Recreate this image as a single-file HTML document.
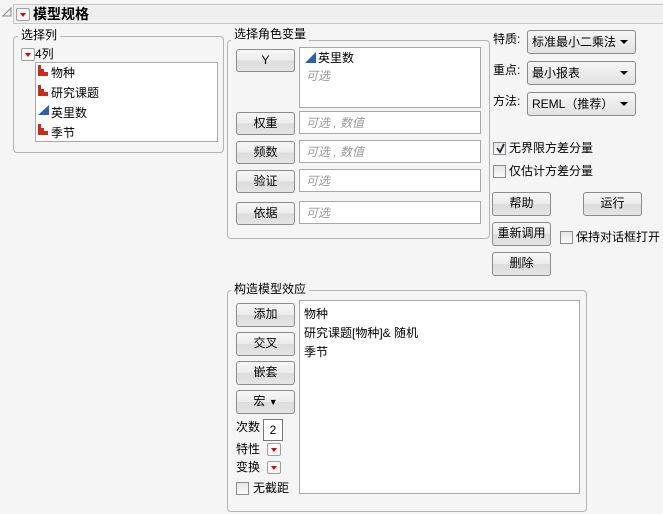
<!DOCTYPE html>
<html><head><meta charset="utf-8"><style>
*{box-sizing:border-box;margin:0;padding:0}
body{width:663px;height:514px;background:#f5f5f5;font-family:"Liberation Sans","Noto Sans CJK SC",sans-serif;font-size:12px;color:#000;position:relative;overflow:hidden}
.a{position:absolute}
.grp{position:absolute;border:1px solid #b4b4b4;border-radius:4px}
.lg{position:absolute;background:#f5f5f5;padding:0 3px;font-size:12px;line-height:14px}
.btn{position:absolute;border:1px solid #8c8c8c;border-radius:3px;background:linear-gradient(#f6f6f6 0%,#ececec 50%,#dcdcdc 51%,#e4e4e4 100%);text-align:center;font-size:12px;line-height:21px}
.box{position:absolute;background:#fff;border:1px solid #a8a8a8}
.ph{color:#999;font-style:italic;position:absolute;left:6px;top:4px;line-height:14px}
.rb{position:absolute;width:14px;height:13px;border:1px solid #a0a0a0;border-radius:2px;background:#f8f8f8}
.rb:after{content:"";position:absolute;left:3px;top:4px;border-left:3.5px solid transparent;border-right:3.5px solid transparent;border-top:4px solid #d00}
.dd{position:absolute;border:1px solid #8c8c8c;border-radius:3px;background:linear-gradient(#f6f6f6,#e2e2e2);line-height:22px;padding-left:4px}
.dd:after{content:"";position:absolute;right:7px;top:9px;border-left:4px solid transparent;border-right:4px solid transparent;border-top:4px solid #000}
.cb{position:absolute;width:13px;height:13px;border:1px solid #8c8c8c;background:linear-gradient(#e6e6e6,#fafafa)}
</style></head><body>
<div class="a" style="left:13px;top:4px;width:660px;height:20px;border:1px solid #c8c8c8;background:#efefef"></div>
<svg class="a" style="left:2px;top:7px" width="10" height="10"><path d="M1 9 L9 9 L9 1 Z" fill="none" stroke="#888"/></svg>
<div class="rb" style="left:16px;top:8px"></div>
<div class="a" style="left:33px;top:5px;font-size:14px;font-weight:bold;line-height:18px">模型规格</div>

<div class="grp" style="left:13px;top:36px;width:211px;height:117px"></div>
<div class="lg" style="left:18px;top:28px">选择列</div>
<div class="rb" style="left:21px;top:48px"></div>
<div class="a" style="left:35px;top:47px;line-height:14px">4列</div>
<div class="box" style="left:35px;top:62px;width:183px;height:80px"></div>
<svg class="a" style="left:37px;top:64px" width="14" height="76">
<g fill="#cc2a1a"><rect x="1" y="1" width="3" height="11"/><rect x="4" y="5" width="3" height="7"/><rect x="7" y="8" width="4" height="4"/>
<rect x="1" y="21" width="3" height="11"/><rect x="4" y="25" width="3" height="7"/><rect x="7" y="28" width="4" height="4"/>
<rect x="1" y="60" width="3" height="11"/><rect x="4" y="64" width="3" height="7"/><rect x="7" y="67" width="4" height="4"/></g>
<path d="M1 51 L12 41 L12 51 Z" fill="#2f5fb0"/></svg>
<div class="a" style="left:51px;top:63px;line-height:20px">物种<br>研究课题<br>英里数<br>季节</div>

<div class="grp" style="left:227px;top:40px;width:263px;height:199px"></div>
<div class="lg" style="left:231px;top:27px">选择角色变量</div>
<div class="btn" style="left:236px;top:49px;width:59px;height:23px">Y</div>
<div class="box" style="left:299px;top:47px;width:182px;height:61px"><svg class="a" style="left:5px;top:4px" width="12" height="12"><path d="M0 11 L11 0 L11 11Z" fill="#2f5fb0"/></svg><span class="a" style="left:18px;top:3px;line-height:14px">英里数</span><span class="ph" style="top:21px">可选</span></div>
<div class="btn" style="left:236px;top:112px;width:59px;height:23px">权重</div>
<div class="box" style="left:299px;top:111px;width:182px;height:23px"><span class="ph">可选 , 数值</span></div>
<div class="btn" style="left:236px;top:141px;width:59px;height:23px">频数</div>
<div class="box" style="left:299px;top:140px;width:182px;height:23px"><span class="ph">可选 , 数值</span></div>
<div class="btn" style="left:236px;top:170px;width:59px;height:23px">验证</div>
<div class="box" style="left:299px;top:169px;width:182px;height:23px"><span class="ph">可选</span></div>
<div class="btn" style="left:236px;top:202px;width:59px;height:23px">依据</div>
<div class="box" style="left:299px;top:201px;width:182px;height:23px"><span class="ph">可选</span></div>

<div class="a" style="left:493px;top:32px;line-height:14px">特质:</div>
<div class="dd" style="left:527px;top:30px;width:109px;height:24px">标准最小二乘法</div>
<div class="a" style="left:493px;top:63px;line-height:14px">重点:</div>
<div class="dd" style="left:527px;top:61px;width:109px;height:24px">最小报表</div>
<div class="a" style="left:493px;top:94px;line-height:14px">方法:</div>
<div class="dd" style="left:527px;top:92px;width:109px;height:24px">REML（推荐）</div>
<div class="cb" style="left:493px;top:142px"><svg class="a" style="left:1px;top:0" width="11" height="11"><path d="M2 5 L5 9 L9 1" fill="none" stroke="#223" stroke-width="1.8"/></svg></div>
<div class="a" style="left:509px;top:141px;line-height:14px">无界限方差分量</div>
<div class="cb" style="left:493px;top:165px"></div>
<div class="a" style="left:509px;top:164px;line-height:14px">仅估计方差分量</div>
<div class="btn" style="left:492px;top:192px;width:59px;height:24px">帮助</div>
<div class="btn" style="left:583px;top:192px;width:59px;height:24px">运行</div>
<div class="btn" style="left:492px;top:222px;width:59px;height:24px">重新调用</div>
<div class="cb" style="left:560px;top:231px"></div>
<div class="a" style="left:576px;top:230px;line-height:14px">保持对话框打开</div>
<div class="btn" style="left:492px;top:252px;width:59px;height:24px">删除</div>

<div class="grp" style="left:227px;top:290px;width:360px;height:222px"></div>
<div class="lg" style="left:231px;top:282px">构造模型效应</div>
<div class="btn" style="left:236px;top:303px;width:59px;height:24px">添加</div>
<div class="btn" style="left:236px;top:332px;width:59px;height:24px">交叉</div>
<div class="btn" style="left:236px;top:361px;width:59px;height:24px">嵌套</div>
<div class="btn" style="left:236px;top:390px;width:59px;height:24px">宏 <span style="font-size:9px">▼</span></div>
<div class="box" style="left:299px;top:300px;width:281px;height:194px"><div class="a" style="left:4px;top:4px;line-height:19px">物种<br>研究课题[物种]&amp; 随机<br>季节</div></div>
<div class="a" style="left:236px;top:420px;line-height:14px">次数</div>
<div class="box" style="left:263px;top:419px;width:20px;height:22px;border-color:#777;text-align:center;line-height:20px">2</div>
<div class="a" style="left:236px;top:442px;line-height:14px">特性</div>
<div class="rb" style="left:267px;top:443px"></div>
<div class="a" style="left:236px;top:460px;line-height:14px">变换</div>
<div class="rb" style="left:267px;top:461px"></div>
<div class="cb" style="left:236px;top:482px"></div>
<div class="a" style="left:253px;top:481px;line-height:14px">无截距</div>
</body></html>
